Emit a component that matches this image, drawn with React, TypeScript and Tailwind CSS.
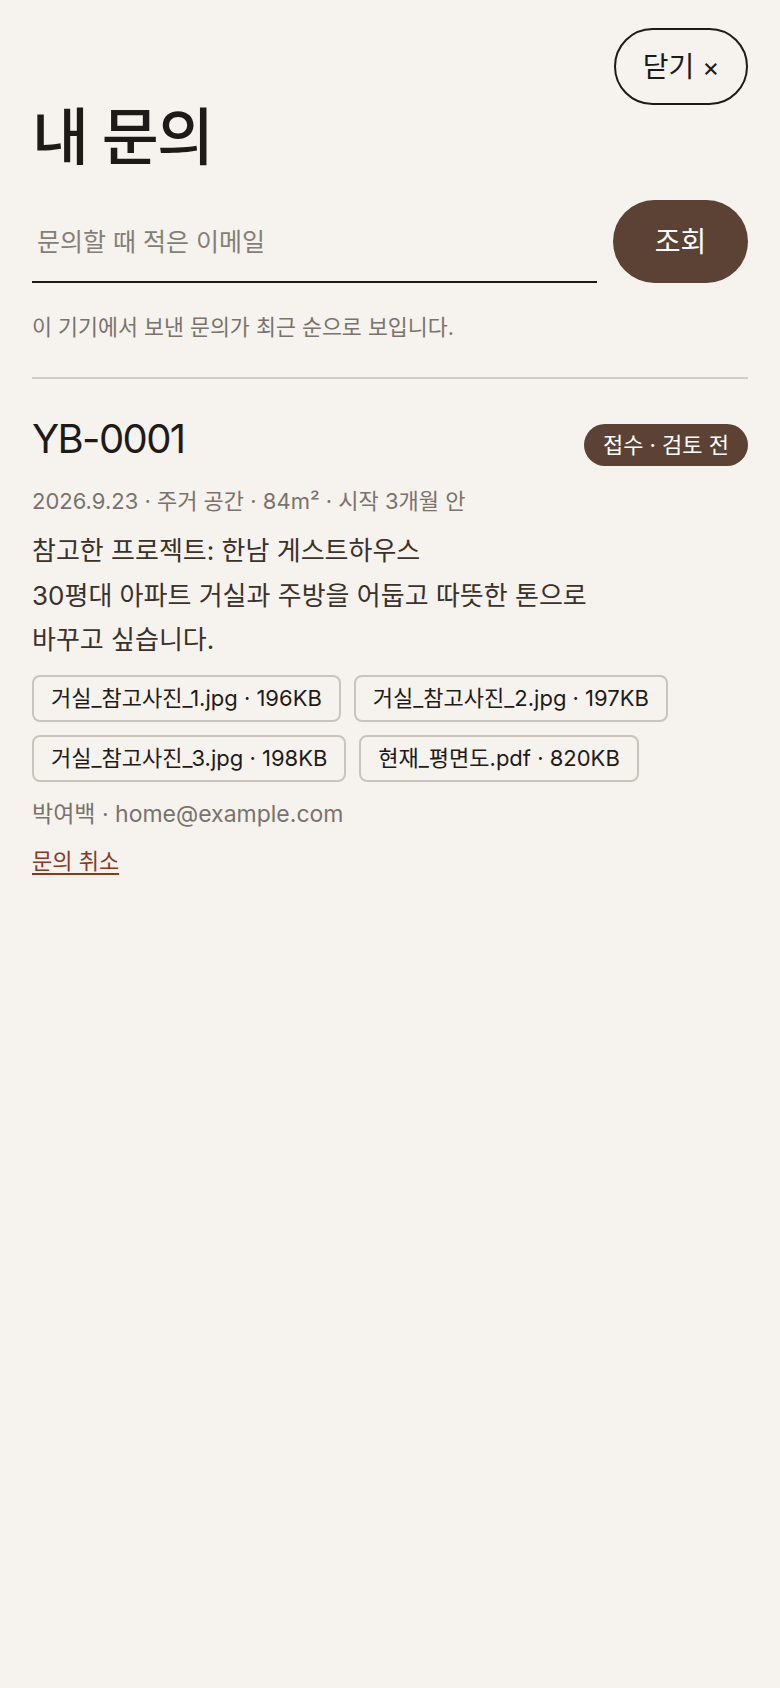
import React from "react";

const files = [
  "거실_참고사진_1.jpg · 196KB",
  "거실_참고사진_2.jpg · 197KB",
  "거실_참고사진_3.jpg · 198KB",
  "현재_평면도.pdf · 820KB",
];

export default function App() {
  return (
    <div className="min-h-screen bg-[#f6f2ee] px-8 pt-7 text-[#1e1a17] font-['Inter','Noto_Sans_CJK_KR',sans-serif]">
      <div className="flex justify-end">
        <button className="flex h-[77px] w-[134px] items-center justify-center gap-2 rounded-full border-2 border-[#1e1a17] text-[28px] leading-none">
          <span>닫기</span>
          <span className="text-[26px]">×</span>
        </button>
      </div>

      <h1 className="text-[62px] font-medium leading-[66px] tracking-[-0.03em]">내 문의</h1>

      <div className="mt-[29px] flex items-end gap-4">
        <input
          className="h-[83px] min-w-0 flex-1 border-b-2 border-[#1e1a17] bg-transparent px-[5px] pt-[2px] text-[25px] text-[#1e1a17] outline-none placeholder:text-[#857e77]"
          placeholder="문의할 때 적은 이메일"
        />
        <button className="h-[83px] w-[135px] rounded-full bg-[#5c4234] text-[28px] text-white">조회</button>
      </div>

      <p className="mt-[29px] text-[21.7px] leading-[30px] text-[#7a726b]">
        이 기기에서 보낸 문의가 최근 순으로 보입니다.
      </p>

      <div className="mt-[35px] border-t-2 border-[#d3ccc4]" />

      <div className="pt-[33px]">
        <div className="flex items-center justify-between">
          <h2 className="text-[40px] leading-[50px] tracking-[-0.04em]">YB-0001</h2>
          <span className="mt-[12px] rounded-full bg-[#5c4234] px-[19px] py-[7px] text-[22px] leading-[28px] text-white">
            접수 · 검토 전
          </span>
        </div>

        <p className="mt-[19px] text-[22px] leading-[32px] text-[#7a726b]">
          2026.9.23 · 주거 공간 · 84m² · 시작 3개월 안
        </p>

        <p className="mt-[12px] text-[26px] leading-[44.5px] text-[#3a312b]">
          참고한 프로젝트: 한남 게스트하우스
          <br />
          30평대 아파트 거실과 주방을 어둡고 따뜻한 톤으로
          <br />
          바꾸고 싶습니다.
        </p>

        <div className="mt-[12px] flex flex-wrap gap-x-[13px] gap-y-[13px]">
          {files.map((f) => (
            <span
              key={f}
              className="flex h-[47px] items-center rounded-[8px] border-2 border-[#cbc4bc] px-[17px] text-[22px] text-[#1e1a17]"
            >
              {f}
            </span>
          ))}
        </div>

        <p className="mt-[17px] text-[23px] leading-[30px] text-[#7a726b]">박여백 · home@example.com</p>

        <button className="mt-[17px] text-[22px] leading-[30px] text-[#8a3a1c] underline underline-offset-4">
          문의 취소
        </button>
      </div>
    </div>
  );
}
